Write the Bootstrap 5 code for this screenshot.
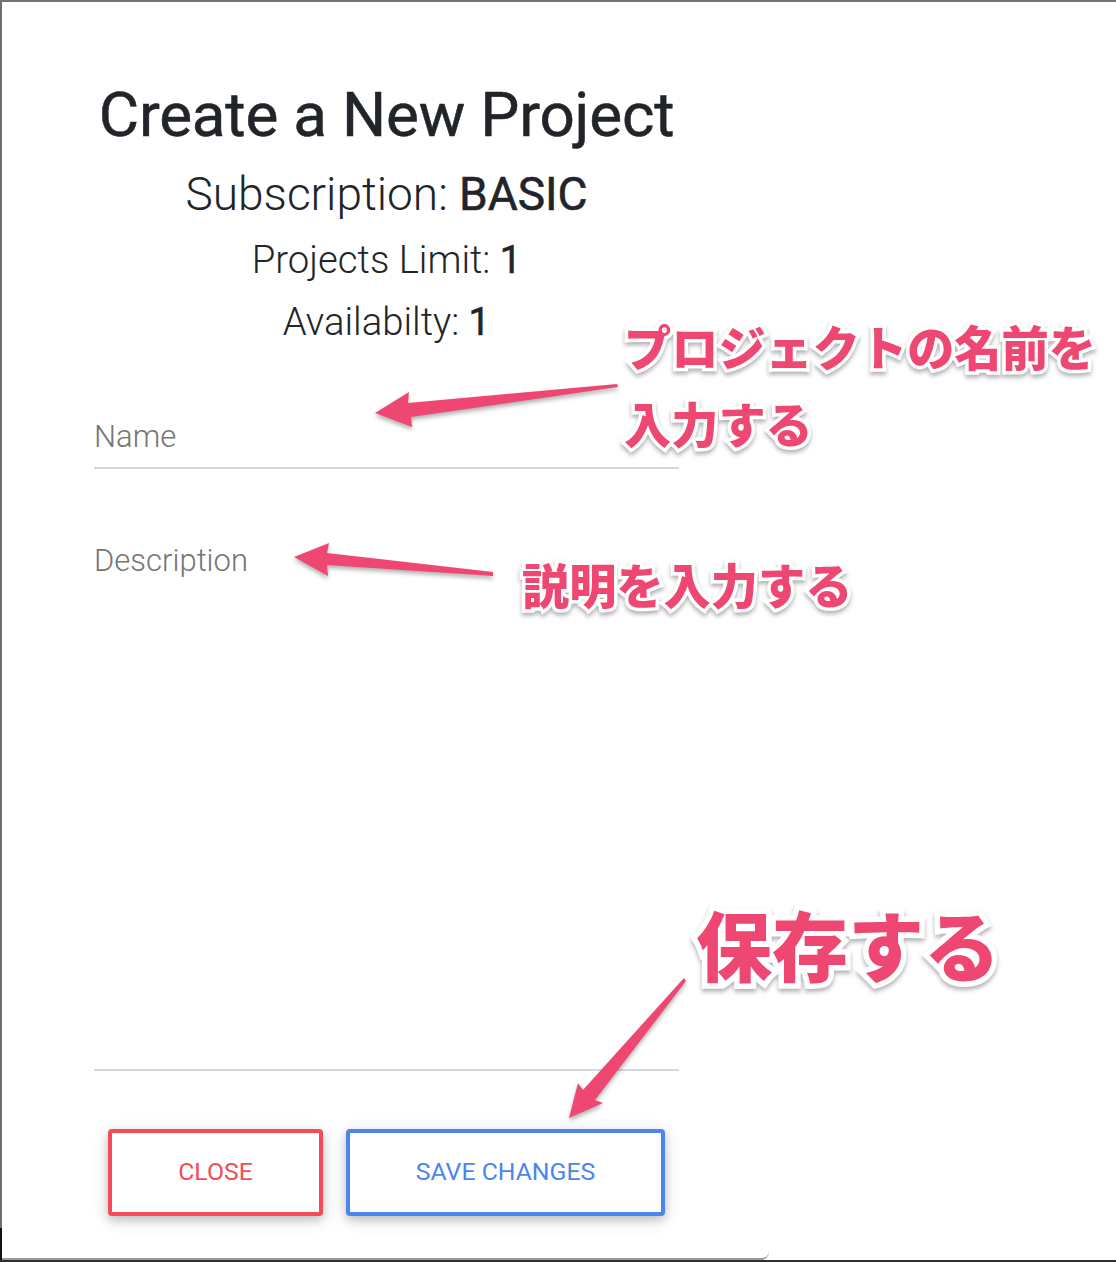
<!DOCTYPE html>
<html lang="en">
<head>
<meta charset="utf-8">
<title>Create a New Project</title>
<link href="https://cdn.jsdelivr.net/npm/bootstrap@5.3.0/dist/css/bootstrap.min.css" rel="stylesheet">
<style>
html,body{height:100%;margin:0;background:#fff;overflow:hidden}
body{font-family:Roboto,"Liberation Sans",sans-serif;color:#212529}
.shot-frame{position:relative;width:1116px;height:1262px;background:#fff;border-top:2px solid #757575;border-bottom:2px solid #2f2f2f;overflow:hidden}
.shot-frame::after{content:"";position:absolute;left:0;bottom:0;width:2px;height:32px;background:#111}
.dialog-panel{width:769px;height:1258px;background:#fff;border-left:2px solid #6f6f6f;border-bottom:2px solid #9a9a9a;border-bottom-right-radius:8px;padding:0 90px 0 92px}
.head-block{padding-top:77px;text-align:center}
.title-main{font-size:62px;font-weight:400;line-height:72px;margin:0 -12px;letter-spacing:-.2px;white-space:nowrap;-webkit-text-stroke:.5px #212529}
.sub-a{font-size:46px;font-weight:300;line-height:54px;margin:16px 0 0}
.sub-b{font-size:38.3px;font-weight:300;line-height:44px;margin:17px 0 0}
.sub-c{font-size:38.3px;font-weight:300;line-height:44px;margin:18px 0 0}
.head-block b{font-weight:400;-webkit-text-stroke:.6px #212529}
.field-name,.field-desc{display:block;width:100%;border:0;border-bottom:2px solid #d3d8e0;border-radius:0;padding:0;background:transparent;font-family:inherit;font-weight:300;font-size:31px;color:#495057;outline:0;resize:none}
.field-name::placeholder,.field-desc::placeholder{color:#757575;opacity:1}
.field-name{height:60px;margin-top:65px;line-height:40px;padding-bottom:3px}
.field-desc{height:554px;margin-top:48px;padding-top:24px;line-height:40px}
.btn-bar{margin-top:58px;padding:0 14px;gap:23px}
.act-btn{height:87px;background:#fff;border-width:4px;border-style:solid;border-radius:4px;font-size:24.8px;font-weight:400;line-height:1;text-transform:uppercase;box-shadow:0 4px 10px rgba(0,0,0,.2),0 4px 20px rgba(0,0,0,.1);padding:0}
.act-close{width:215px;color:#f44c56;border-color:#f44c56}
.act-save{width:319px;color:#4a85f0;border-color:#4a85f0}
.act-close:hover{color:#f44c56;border-color:#f44c56;background:#fff}
.act-save:hover{color:#4a85f0;border-color:#4a85f0;background:#fff}
.note-text{position:absolute;margin:0;font-family:"Noto Sans CJK JP",sans-serif;font-weight:900;color:#ee4872;-webkit-text-stroke:7px #fff;paint-order:stroke fill;filter:drop-shadow(0 3px 2px rgba(0,0,0,.3));white-space:nowrap;line-height:1}
.note-a{left:624px;top:320px;font-size:47.2px}
.note-b{left:624px;top:397px;font-size:47.2px}
.note-c{left:522px;top:558px;font-size:47.2px}
.note-d{left:696px;top:903px;font-size:76px;-webkit-text-stroke:11px #fff}
.arrow-layer{position:absolute;left:0;top:-2px;width:1116px;height:1262px;pointer-events:none;filter:drop-shadow(0 3px 2px rgba(0,0,0,.3))}
</style>
</head>
<body>
<div class="shot-frame">
  <div class="dialog-panel">
    <div class="head-block">
      <h1 class="title-main">Create a New Project</h1>
      <p class="sub-a">Subscription: <b>BASIC</b></p>
      <p class="sub-b">Projects Limit: <b>1</b></p>
      <p class="sub-c">Availabilty: <b>1</b></p>
    </div>
    <input class="field-name" type="text" placeholder="Name">
    <textarea class="field-desc" placeholder="Description"></textarea>
    <div class="d-flex btn-bar">
      <button type="button" class="btn act-btn act-close">Close</button>
      <button type="button" class="btn act-btn act-save">Save changes</button>
    </div>
  </div>
  <svg class="arrow-layer" viewBox="0 0 1116 1262" aria-hidden="true">
    <path fill="#ee4872" d="M617 384 L618 387 L411 417 L412 427 L375 413 L409 392 L408 403 Z"/>
    <path fill="#ee4872" d="M493 572 L493 576 L327 565 L328 576 L294 557 L329 543 L327 553 Z"/>
    <path fill="#ee4872" d="M684 978 L686 981 L595 1100 L603 1103 L569 1118 L578 1083 L583 1090 Z"/>
  </svg>
  <p class="note-text note-a">プロジェクトの名前を</p>
  <p class="note-text note-b">入力する</p>
  <p class="note-text note-c">説明を入力する</p>
  <p class="note-text note-d">保存する</p>
</div>
<script src="https://cdn.jsdelivr.net/npm/bootstrap@5.3.0/dist/js/bootstrap.bundle.min.js"></script>
</body>
</html>
